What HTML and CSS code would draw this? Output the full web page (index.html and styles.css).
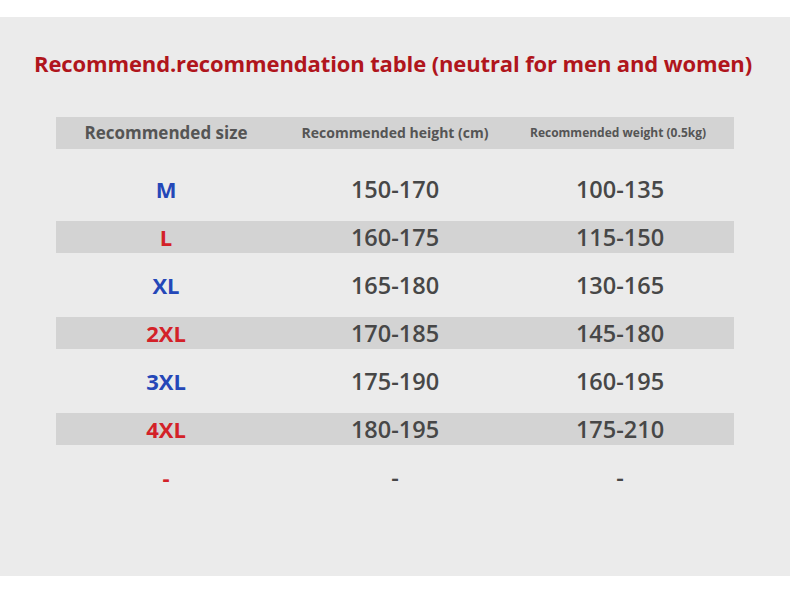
FILE: index.html
```html
<!DOCTYPE html>
<html>
<head>
<meta charset="utf-8">
<link rel="stylesheet" href="styles.css">
</head>
<body>
<div class="panel">
  <h1 class="title">Recommend.recommendation table (neutral for men and women)</h1>
  <div class="table">
    <div class="row head">
      <div class="c h1">Recommended size</div>
      <div class="c h2">Recommended height (cm)</div>
      <div class="c h3">Recommended weight (0.5kg)</div>
    </div>
    <div class="body">
      <div class="row"><div class="c size blue">M</div><div class="c">150-170</div><div class="c">100-135</div></div>
      <div class="row alt"><div class="c size red">L</div><div class="c">160-175</div><div class="c">115-150</div></div>
      <div class="row"><div class="c size blue">XL</div><div class="c">165-180</div><div class="c">130-165</div></div>
      <div class="row alt"><div class="c size red">2XL</div><div class="c">170-185</div><div class="c">145-180</div></div>
      <div class="row"><div class="c size blue">3XL</div><div class="c">175-190</div><div class="c">160-195</div></div>
      <div class="row alt"><div class="c size red">4XL</div><div class="c">180-195</div><div class="c">175-210</div></div>
      <div class="row"><div class="c size red">-</div><div class="c">-</div><div class="c">-</div></div>
    </div>
  </div>
</div>
</body>
</html>
```

FILE: styles.css
```css
html, body {
  margin: 0;
  padding: 0;
  background: #ffffff;
}
body {
  padding-top: 17px;
  height: 593px;
  box-sizing: border-box;
}
.panel {
  background: #ebebeb;
  height: 559px;
  padding-top: 31px;
  box-sizing: border-box;
}
.title {
  margin: 0 0 0 34px;
  font-family: "Open Sans", "Liberation Sans", sans-serif;
  font-weight: 700;
  font-size: 22px;
  line-height: 30px;
  color: #b0151c;
  letter-spacing: -0.12px;
}
.table {
  margin: 39px 0 0 56px;
  width: 678px;
}
.row {
  display: grid;
  grid-template-columns: 220px 238px 212px;
  padding-right: 8px;
  height: 32px;
  align-items: center;
}
.head {
  background: #d3d3d3;
}
.body {
  display: flex;
  flex-direction: column;
  gap: 16px;
  margin-top: 24px;
}
.alt {
  background: #d3d3d3;
}
.c {
  text-align: center;
  font-family: "Open Sans", "Liberation Sans", sans-serif;
  font-weight: 600;
  font-size: 23.5px;
  color: #474747;
  line-height: 32px;
}
.head .c {
  font-weight: 700;
  color: #555555;
}
.h1 { font-size: 17px; }
.h2 { font-size: 14px; }
.h3 { font-size: 12px; padding-right: 4px; }
.size { font-weight: 700; font-size: 22px; }
.blue { color: #2447b8; }
.red { color: #d32128; }
```
